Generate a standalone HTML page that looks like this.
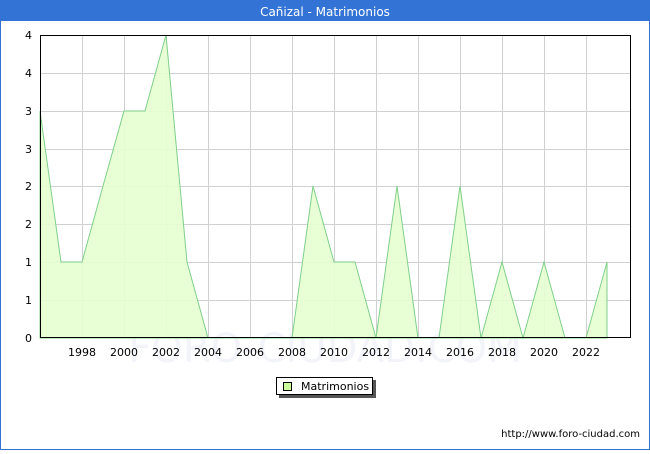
<!DOCTYPE html>
<html><head><style>
body{margin:0;width:650px;height:450px;overflow:hidden;font-family:"DejaVu Sans","Liberation Sans",sans-serif;}
</style></head><body>
<svg width="650" height="450" xmlns="http://www.w3.org/2000/svg" font-family="DejaVu Sans, Liberation Sans, sans-serif">
<rect x="0.5" y="0.5" width="649" height="449" fill="#fff" stroke="#3373d6"/>
<rect x="0" y="0" width="650" height="21" fill="#3373d6"/>
<text x="325" y="16" text-anchor="middle" fill="#fff" font-size="12">Cañizal - Matrimonios</text>
<g stroke="#d0d0d0" stroke-width="1">
<line x1="40" x2="630" y1="73.5" y2="73.5"/><line x1="40" x2="630" y1="111.5" y2="111.5"/>
<line x1="40" x2="630" y1="149.5" y2="149.5"/><line x1="40" x2="630" y1="186.5" y2="186.5"/>
<line x1="40" x2="630" y1="224.5" y2="224.5"/><line x1="40" x2="630" y1="262.5" y2="262.5"/>
<line x1="40" x2="630" y1="300.5" y2="300.5"/>
<line x1="82.5" x2="82.5" y1="35" y2="338"/><line x1="124.5" x2="124.5" y1="35" y2="338"/>
<line x1="166.5" x2="166.5" y1="35" y2="338"/><line x1="208.5" x2="208.5" y1="35" y2="338"/>
<line x1="250.5" x2="250.5" y1="35" y2="338"/><line x1="292.5" x2="292.5" y1="35" y2="338"/>
<line x1="334.5" x2="334.5" y1="35" y2="338"/><line x1="376.5" x2="376.5" y1="35" y2="338"/>
<line x1="418.5" x2="418.5" y1="35" y2="338"/><line x1="460.5" x2="460.5" y1="35" y2="338"/>
<line x1="502.5" x2="502.5" y1="35" y2="338"/><line x1="544.5" x2="544.5" y1="35" y2="338"/>
<line x1="586.5" x2="586.5" y1="35" y2="338"/>
</g>
<text x="325" y="362" text-anchor="middle" font-size="40" fill="#f2f4fa">FORO-CIUDAD.COM</text>
<polygon fill="#e6ffd0" fill-opacity="0.9" stroke="#7fcf8a" stroke-width="1"
points="40,338 40,111 61,262 82,262 103,186 124,111 145,111 166,35 187,262 208,338 229,338 250,338 271,338 292,338 313,186 334,262 355,262 376,338 397,186 418,338 439,338 460,186 481,338 502,262 523,338 544,262 565,338 586,338 607,262 607,338"/>
<rect x="40.5" y="35.5" width="590" height="302" fill="none" stroke="#000"/>
<g font-size="11" fill="#000" text-anchor="end">
<text x="32" y="39">4</text><text x="32" y="77">4</text><text x="32" y="115">3</text>
<text x="32" y="153">3</text><text x="32" y="190">2</text><text x="32" y="228">2</text>
<text x="32" y="266">1</text><text x="32" y="304">1</text><text x="32" y="342">0</text>
</g>
<g font-size="11" fill="#000" text-anchor="middle">
<text x="82" y="356">1998</text><text x="124" y="356">2000</text><text x="166" y="356">2002</text>
<text x="208" y="356">2004</text><text x="250" y="356">2006</text><text x="292" y="356">2008</text>
<text x="334" y="356">2010</text><text x="376" y="356">2012</text><text x="418" y="356">2014</text>
<text x="460" y="356">2016</text><text x="502" y="356">2018</text><text x="544" y="356">2020</text>
<text x="586" y="356">2022</text>
</g>
<rect x="279" y="380" width="97" height="18" fill="#555"/>
<rect x="276.5" y="377.5" width="96" height="17" fill="#fff" stroke="#000"/>
<rect x="283.5" y="382.5" width="8" height="8" fill="#ccff99" stroke="#000"/>
<text x="301" y="390" font-size="11">Matrimonios</text>
<text x="640" y="437" font-size="10" text-anchor="end">http://www.foro-ciudad.com</text>
</svg>
</body></html>
